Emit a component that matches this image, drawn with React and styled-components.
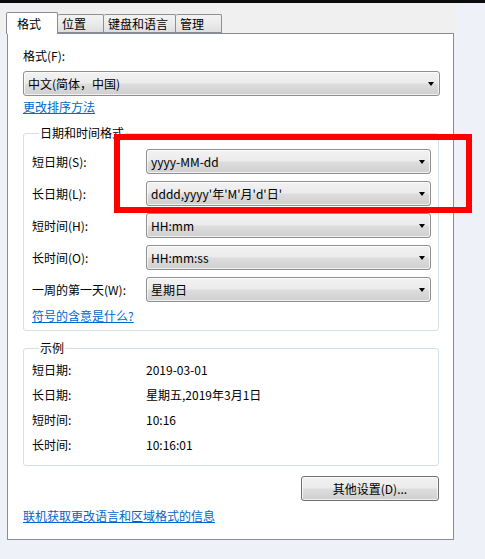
import React from "react";
import styled, { createGlobalStyle } from "styled-components";

const GlobalStyle = createGlobalStyle`
  html, body {
    margin: 0;
    padding: 0;
    background: #eef1f8;
  }
  body {
    font-family: "Noto Sans CJK SC", "Microsoft YaHei", sans-serif;
    font-size: 12px;
    color: #000;
  }
`;

const Page = styled.div`
  position: relative;
  width: 485px;
  height: 559px;
  overflow: hidden;
`;

const TopBar = styled.div`
  height: 3px;
  background: #0b0b0b;
`;

const TabStrip = styled.div`
  width: 457px;
  height: 30px;
  background: #f0f0f0;
  display: flex;
  align-items: flex-end;
  padding-left: 6px;
  box-sizing: border-box;
`;

const Tab = styled.div`
  position: relative;
  box-sizing: border-box;
  width: ${(p) => p.$w}px;
  height: ${(p) => (p.$active ? 22 : 19)}px;
  margin-bottom: ${(p) => (p.$active ? -1 : 0)}px;
  padding-left: ${(p) => (p.$active ? 10 : 4)}px;
  display: flex;
  align-items: center;
  border: 1px solid ${(p) => (p.$active ? "#898c95" : "#8e8f8f")};
  border-bottom: ${(p) => (p.$active ? "none" : "1px solid #898c95")};
  border-left: ${(p) => (p.$first || p.$active ? "" : "none")};
  border-radius: 2px 2px 0 0;
  background: ${(p) =>
    p.$active ? "#fff" : "linear-gradient(#f3f3f3 0%, #ebebeb 50%, #dedede 100%)"};
  z-index: ${(p) => (p.$active ? 2 : 1)};
  line-height: 16px;
  white-space: nowrap;
`;

const Panel = styled.div`
  box-sizing: border-box;
  margin-left: 7px;
  width: 447px;
  height: 507px;
  background: #fff;
  border: 1px solid #898c95;
  padding: 14px 13px 0 15px;
  display: flex;
  flex-direction: column;
`;

const Label = styled.div`
  line-height: 16px;
  white-space: nowrap;
`;

const Combo = styled.div`
  box-sizing: border-box;
  height: 25px;
  width: ${(p) => (p.$wide ? "417px" : "285px")};
  margin-top: ${(p) => p.$mt || 0}px;
  border: 1px solid #8e8f8f;
  border-radius: 3px;
  background: linear-gradient(#f2f2f2 0%, #ebebeb 48%, #dddddd 52%, #cfcfcf 100%);
  box-shadow: inset 0 0 0 1px rgba(255, 255, 255, 0.7);
  display: flex;
  align-items: center;
  justify-content: space-between;
  padding: 0 5px 0 4px;
  line-height: 16px;
  white-space: nowrap;
`;

const Arrow = styled.span`
  width: 0;
  height: 0;
  border-left: 3.5px solid transparent;
  border-right: 3.5px solid transparent;
  border-top: 4px solid #000;
  margin-top: 1px;
`;

const Link = styled.a`
  display: block;
  color: #0066cc;
  text-decoration: underline;
  line-height: 16px;
  margin-top: ${(p) => p.$mt || 0}px;
  white-space: nowrap;
  cursor: pointer;
`;

const Group = styled.fieldset`
  margin: ${(p) => p.$mt}px 0 0 0;
  width: 416px;
  box-sizing: border-box;
  border: 1px solid #d5dfe5;
  border-radius: 3px;
  padding: ${(p) => p.$pad};
  min-width: 0;
`;

const Legend = styled.legend`
  padding: 0 1px;
  margin-left: 7px;
  line-height: 16px;
  color: #000;
`;

const FormRows = styled.div`
  display: flex;
  flex-direction: column;
  gap: 7px;
`;

const Row = styled.div`
  display: flex;
  align-items: center;
  height: ${(p) => p.$h || 25}px;
`;

const RowLabel = styled.div`
  width: 114px;
  flex: none;
  line-height: 16px;
  white-space: nowrap;
`;

const Value = styled.div`
  line-height: 16px;
  white-space: nowrap;
`;

const ButtonRow = styled.div`
  display: flex;
  justify-content: flex-end;
  width: 416px;
  margin-top: 10px;
`;

const Button = styled.div`
  box-sizing: border-box;
  width: 138px;
  height: 25px;
  border: 1px solid #707070;
  border-radius: 3px;
  background: linear-gradient(#f2f2f2 0%, #ebebeb 48%, #dddddd 52%, #cfcfcf 100%);
  box-shadow: inset 0 0 0 1px rgba(255, 255, 255, 0.7);
  display: flex;
  align-items: center;
  justify-content: center;
  line-height: 16px;
`;

const Highlight = styled.div`
  position: absolute;
  left: 114px;
  top: 134px;
  width: 358px;
  height: 79px;
  box-sizing: border-box;
  border: 6px solid #f00;
  pointer-events: none;
`;

const tabs = [
  { label: "格式", w: 52, active: true },
  { label: "位置", w: 46 },
  { label: "键盘和语言", w: 72 },
  { label: "管理", w: 46 },
];

const formats = [
  { label: "短日期(S):", value: "yyyy-MM-dd" },
  { label: "长日期(L):", value: "dddd,yyyy'年'M'月'd'日'" },
  { label: "短时间(H):", value: "HH:mm" },
  { label: "长时间(O):", value: "HH:mm:ss" },
  { label: "一周的第一天(W):", value: "星期日" },
];

const examples = [
  { label: "短日期:", value: "2019-03-01" },
  { label: "长日期:", value: "星期五,2019年3月1日" },
  { label: "短时间:", value: "10:16" },
  { label: "长时间:", value: "10:16:01" },
];

export default function App() {
  return (
    <Page>
      <GlobalStyle />
      <TopBar />
      <TabStrip>
        {tabs.map((t, i) => (
          <Tab key={t.label} $w={t.w} $active={t.active} $first={i === 0}>
            {t.label}
          </Tab>
        ))}
      </TabStrip>
      <Panel>
        <Label>格式(F):</Label>
        <Combo $wide $mt={7}>
          <span>中文(简体，中国)</span>
          <Arrow />
        </Combo>
        <Link $mt={3}>更改排序方法</Link>

        <Group $mt={10} $pad="8px 7px 6px 8px">
          <Legend>日期和时间格式</Legend>
          <FormRows>
            {formats.map((f) => (
              <Row key={f.label}>
                <RowLabel>{f.label}</RowLabel>
                <Combo>
                  <span>{f.value}</span>
                  <Arrow />
                </Combo>
              </Row>
            ))}
          </FormRows>
          <Link $mt={6}>符号的含意是什么?</Link>
        </Group>

        <Group $mt={9} $pad="1px 7px 8px 8px">
          <Legend>示例</Legend>
          {examples.map((e) => (
            <Row key={e.label}>
              <RowLabel>{e.label}</RowLabel>
              <Value>{e.value}</Value>
            </Row>
          ))}
        </Group>

        <ButtonRow>
          <Button>其他设置(D)...</Button>
        </ButtonRow>
        <Link $mt={7}>联机获取更改语言和区域格式的信息</Link>
      </Panel>
      <Highlight />
    </Page>
  );
}
